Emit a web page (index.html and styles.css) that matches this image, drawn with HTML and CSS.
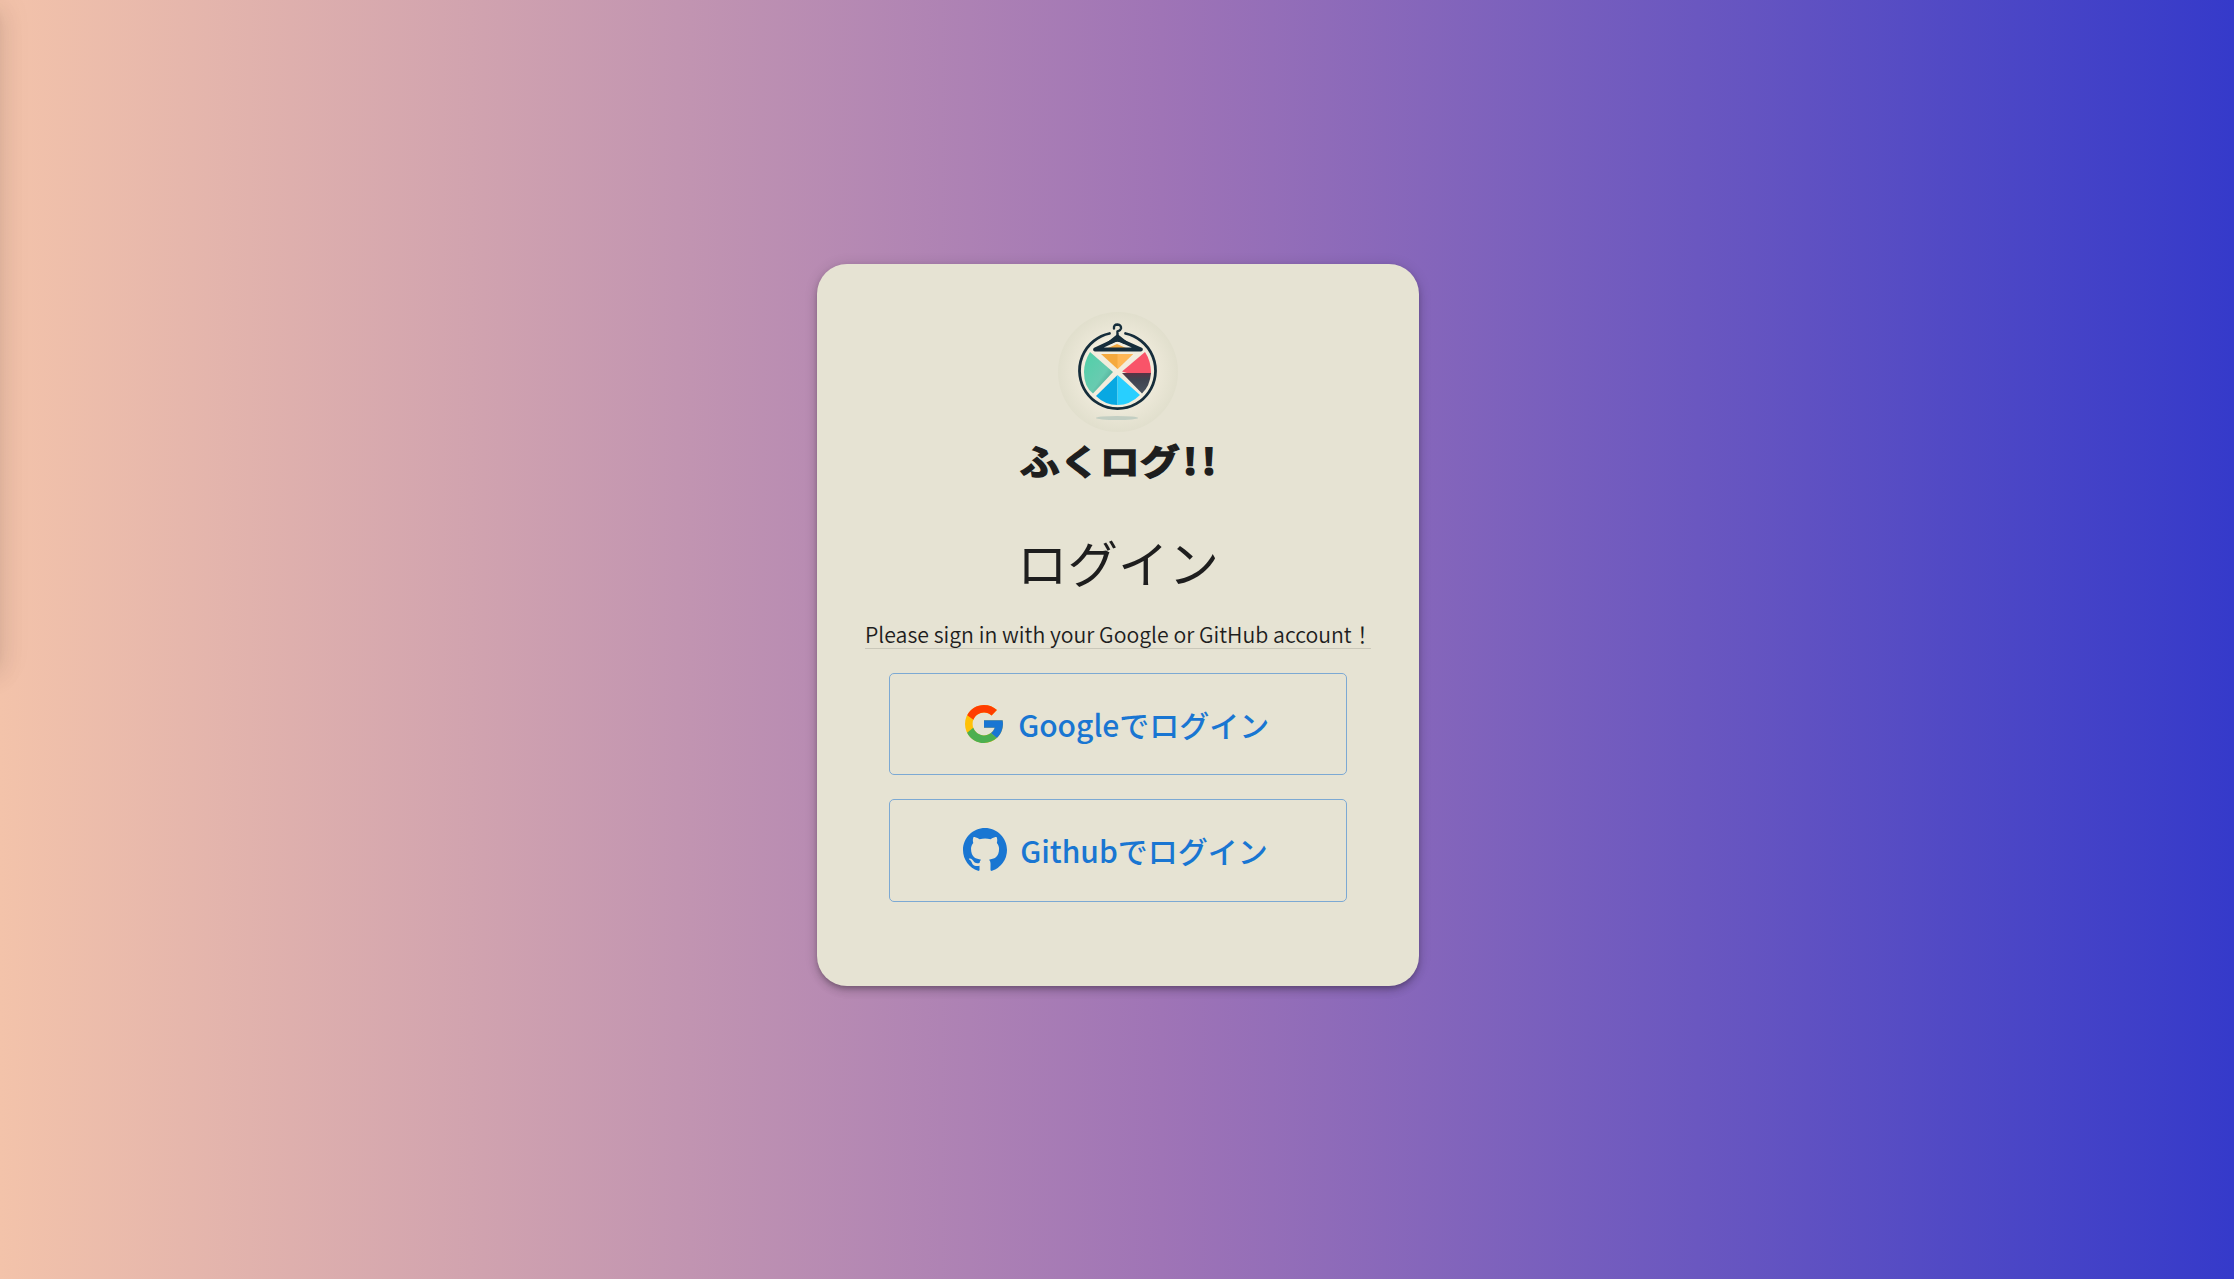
FILE: index.html
```html
<!DOCTYPE html>
<html lang="ja">
<head>
<meta charset="utf-8">
<title>ふくログ!! ログイン</title>
<link rel="stylesheet" href="styles.css">
</head>
<body>
<div class="drawer-shadow"></div>
<main class="card">
  <svg class="logo" viewBox="0 0 120 120" aria-hidden="true">
    <defs>
      <radialGradient id="halo"><stop offset="0" stop-color="#f4efdf"/><stop offset=".65" stop-color="#ece8d8"/><stop offset="1" stop-color="#e1dfcd"/></radialGradient>
      <linearGradient id="mint" x1="0" y1="0" x2="1" y2="1"><stop offset="0" stop-color="#4fd0a8"/><stop offset=".6" stop-color="#68cbb0"/><stop offset="1" stop-color="#3b8f82"/></linearGradient>
      <linearGradient id="slate" x1="0" y1="0" x2="0" y2="1"><stop offset="0" stop-color="#5a3344"/><stop offset=".3" stop-color="#3f434f"/><stop offset="1" stop-color="#4a5460"/></linearGradient>
    </defs>
    <circle cx="60" cy="60" r="60" fill="url(#halo)"/>
    <ellipse cx="59" cy="106" rx="21" ry="2" fill="#c2cec2"/>
    <circle cx="59.500" cy="60" r="36" fill="#f2eddd"/>
    <path d="M32 40Q26 50 26 60Q26 75 35 81.500L55 60Z" fill="url(#mint)"/>
    <path d="M43 42H75L59.500 57Z" fill="#f5a93d"/>
    <path d="M59.500 42H75L59.500 57Z" fill="#ffb755"/>
    <path d="M50 36L59 32L68 36Z" fill="#f2a941"/>
    <path d="M87 40Q93 49 93 61H69L64 59.500Z" fill="#f95469"/>
    <path d="M68 61H93Q92 74 84 81.500L64 61Z" fill="url(#slate)"/>
    <path d="M59.500 63V93Q47 93 38 84Z" fill="#08a8e2"/>
    <path d="M59.500 63V93Q72 93 82 83Z" fill="#28cfff"/>
    <path d="M51.500 21.500A38 38 0 1 0 67.500 21.500" fill="none" stroke="#152d3b" stroke-width="2.800" stroke-linecap="round"/>
    <path d="M37 37.500L59.500 27L83 37.500Z" fill="none" stroke="#152d3b" stroke-width="3.800" stroke-linejoin="round"/>
    <path d="M47 32L59.500 22L72 32L66 32Q59 27.500 53 32Z" fill="#152d3b"/>
    <path d="M56 16.500Q55.500 12.500 59.500 12.500Q63.500 13 63 16.500Q62.500 18.500 59.500 19.500V25" fill="none" stroke="#152d3b" stroke-width="2.400" stroke-linecap="round"/>
  </svg>
  <div class="brand">ふくログ<span class="bang">!!</span></div>
  <h1 class="title">ログイン</h1>
  <p class="lead">Please sign in with your Google or GitHub account！</p>
  <div class="actions">
    <button class="login" type="button">
      <svg class="google" viewBox="4 4 40 40" aria-hidden="true"><path fill="#FFC107" d="M43.611,20.083H42V20H24v8h11.303c-1.649,4.657-6.080,8-11.303,8c-6.627,0-12-5.373-12-12c0-6.627,5.373-12,12-12c3.059,0,5.842,1.154,7.961,3.039l5.657-5.657C34.046,6.053,29.268,4,24,4C12.955,4,4,12.955,4,24c0,11.045,8.955,20,20,20c11.045,0,20-8.955,20-20C44,22.659,43.862,21.350,43.611,20.083z"/><path fill="#FF3D00" d="M6.306,14.691l6.571,4.819C14.655,15.108,18.961,12,24,12c3.059,0,5.842,1.154,7.961,3.039l5.657-5.657C34.046,6.053,29.268,4,24,4C16.318,4,9.656,8.337,6.306,14.691z"/><path fill="#4CAF50" d="M24,44c5.166,0,9.860-1.977,13.409-5.192l-6.190-5.238C29.211,35.091,26.715,36,24,36c-5.202,0-9.619-3.317-11.283-7.946l-6.522,5.025C9.505,39.556,16.227,44,24,44z"/><path fill="#1976D2" d="M43.611,20.083H42V20H24v8h11.303c-0.792,2.237-2.231,4.166-4.087,5.571c0.001-0.001,0.002-0.001,0.003-0.002l6.190,5.238C36.971,39.205,44,34,44,24C44,22.659,43.862,21.350,43.611,20.083z"/></svg>
      <span>Googleでログイン</span>
    </button>
    <button class="login login-github" type="button">
      <svg class="github" viewBox="0 0 16 16" aria-hidden="true"><path fill="#1976d2" d="M8 0C3.580 0 0 3.580 0 8c0 3.540 2.290 6.530 5.470 7.590.4.070.55-.17.55-.38 0-.19-.01-.82-.01-1.490-2.010.37-2.530-.49-2.690-.94-.09-.23-.48-.94-.82-1.130-.28-.15-.68-.52-.01-.53.63-.01 1.080.58 1.230.82.72 1.210 1.870.87 2.330.66.07-.52.28-.87.51-1.070-1.780-.2-3.640-.89-3.640-3.950 0-.87.31-1.590.82-2.150-.08-.2-.36-1.020.08-2.120 0 0 .67-.21 2.200.82.64-.18 1.320-.27 2-.27s1.360.09 2 .27c1.530-1.040 2.200-.82 2.200-.82.44 1.100.16 1.920.08 2.120.51.56.82 1.270.82 2.150 0 3.070-1.870 3.750-3.650 3.950.29.25.54.73.54 1.480 0 1.070-.01 1.930-.01 2.200 0 .21.15.46.55.38A8.010 8.010 0 0 0 16 8c0-4.420-3.580-8-8-8z"/></svg>
      <span>Githubでログイン</span>
    </button>
  </div>
</main>
</body>
</html>
```
FILE: styles.css
```css
* { box-sizing: border-box; }
body {
  margin: 0;
  min-height: 100vh;
  padding-top: 264px;
  overflow: hidden;
  font-family: "Noto Sans CJK JP", sans-serif;
  color: #1e1e1e;
  background: linear-gradient(to right, #f3c3aa, #9f74b6 52%, #353aca);
}
.drawer-shadow {
  position: absolute;
  left: -300px;
  top: 0;
  width: 300px;
  height: 660px;
  box-shadow: 0 8px 10px -5px rgba(0,0,0,.1), 0 16px 24px 2px rgba(0,0,0,.07), 0 6px 30px 5px rgba(0,0,0,.06);
}
.card {
  display: flex;
  flex-direction: column;
  align-items: center;
  width: 602px;
  height: 722px;
  margin: 0 auto 0 817px;
  padding-top: 48px;
  border-radius: 30px;
  background: #e6e3d3;
  box-shadow: 0 3px 5px -1px rgba(0,0,0,.2), 0 5px 8px rgba(0,0,0,.14), 0 1px 14px rgba(0,0,0,.12);
}
.logo { width: 120px; height: 120px; flex: none; }
.brand {
  height: 58px;
  line-height: 56px;
  font-size: 40px;
  font-weight: 700;
  white-space: nowrap;
  -webkit-text-stroke: 1.500px #1e1e1e;
  transform: scaleY(.88);
}
.bang { letter-spacing: 4px; margin: 0 -4px 0 3px; }
.title {
  margin: 36px 0 0;
  height: 72px;
  line-height: 71px;
  font-size: 50.500px;
  font-weight: 400;
}
.lead {
  margin: 20px 0 0;
  width: 506px;
  height: 31px;
  line-height: 31px;
  font-size: 21.250px;
  font-weight: 350;
  white-space: nowrap;
  border-bottom: 1px solid #c9c7b9;
}
.actions { display: flex; flex-direction: column; gap: 24px; margin-top: 24px; }
.login {
  display: flex;
  align-items: center;
  justify-content: center;
  width: 458px;
  height: 102.400px;
  padding: 0 2px 0 0;
  border: 1px solid #7ca9d3;
  border-radius: 5px;
  background: transparent;
  color: #1976d2;
  font: 500 30px/56px "Noto Sans CJK JP", sans-serif;
}
.login-github { padding: 0 5px 2px 0; }
.google { width: 38px; height: 38px; margin-right: 15.500px; }
.github { width: 44px; height: 44px; margin-right: 13px; }
```
